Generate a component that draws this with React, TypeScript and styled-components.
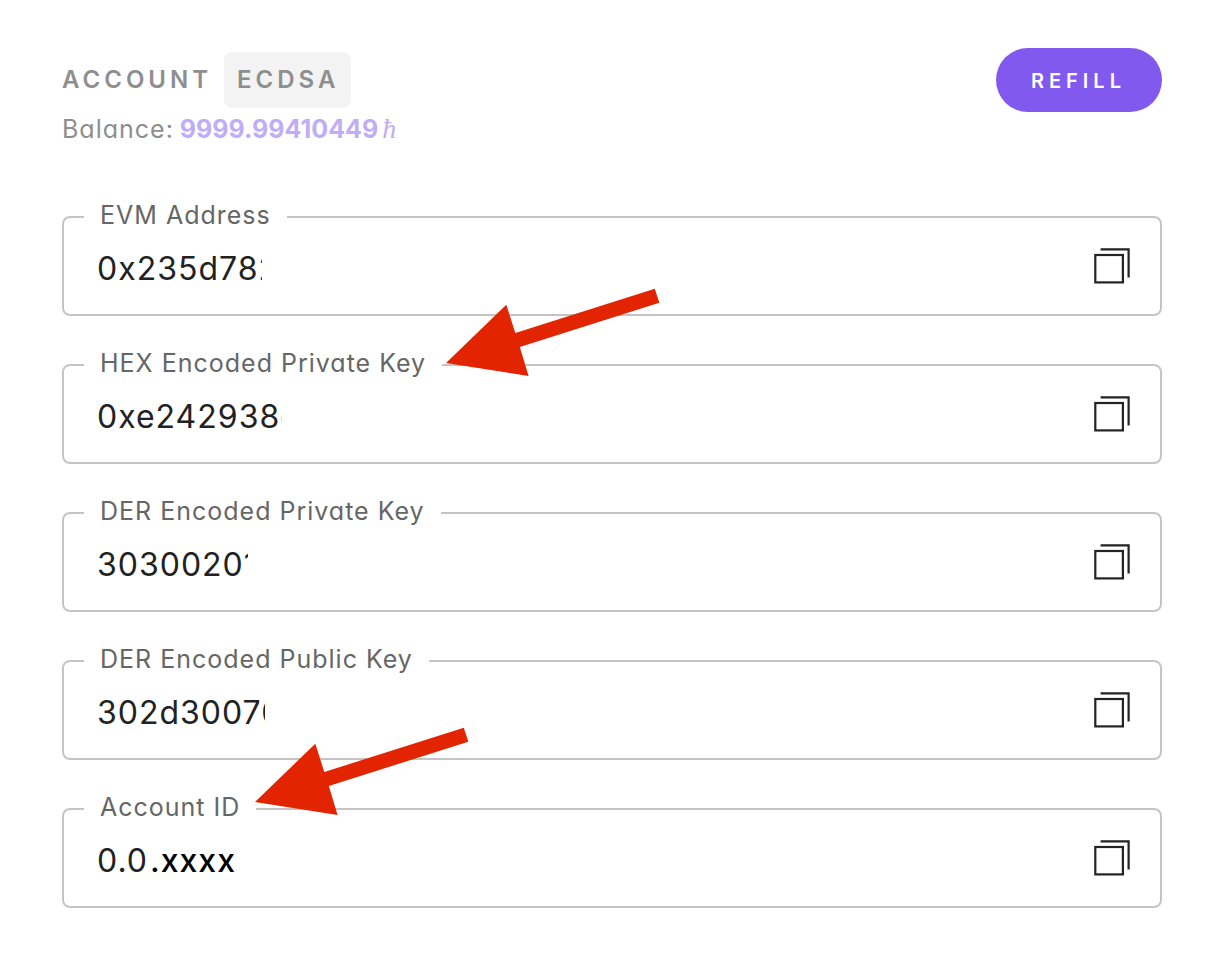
import React, { useId } from "react";
import styled, { createGlobalStyle } from "styled-components";

const GlobalStyle = createGlobalStyle`
  *, *::before, *::after { box-sizing: border-box; }
  body {
    margin: 0;
    background: #ffffff;
    color: #222222;
    font-family: Inter, "Liberation Sans", sans-serif;
    font-feature-settings: "cv11";
  }
`;

const Page = styled.main`
  padding: 48px 62px 58px;
`;

const Header = styled.header`
  display: flex;
  align-items: flex-start;
  justify-content: space-between;
  margin-bottom: 56px;
`;

const Summary = styled.div`
  padding-top: 4px;
`;

const Title = styled.h1`
  display: flex;
  align-items: center;
  gap: 12px;
  margin: 0;
  color: #8e8e8e;
  font-size: 24px;
  font-weight: 600;
  line-height: 56px;
  letter-spacing: 4px;
`;

const KeyType = styled.span`
  padding: 0 12px 0 13px;
  border-radius: 8px;
  background: #f3f3f3;
`;

const Balance = styled.p`
  display: flex;
  align-items: baseline;
  gap: 6px;
  margin: 5px 0 0;
  color: #8e8e8e;
  font-size: 25px;
  line-height: 32px;
  letter-spacing: 1px;
`;

const Amount = styled.strong`
  color: #c1adf7;
  font-weight: 700;
  letter-spacing: 0;
`;

const Unit = styled.i`
  margin-left: 4px;
  font-family: "Liberation Serif", serif;
  font-size: 28px;
  font-weight: 400;
  line-height: 1;
`;

const RefillButton = styled.button`
  height: 64px;
  padding: 2px 36px 0 35px;
  border: 0;
  border-radius: 32px;
  background: #8259ef;
  color: #ffffff;
  font-family: inherit;
  font-size: 20px;
  font-weight: 600;
  letter-spacing: 5px;
  cursor: pointer;
`;

const Fields = styled.form`
  display: flex;
  flex-direction: column;
  gap: 33px;
`;

const Fieldset = styled.fieldset`
  position: relative;
  min-width: 0;
  margin: 0;
  padding: 0 30px 16px 20px;
  border: 2px solid #c4c4c4;
  border-radius: 8px;
`;

const Legend = styled.legend`
  padding: 0 16px 4px;
  color: #666666;
  font-size: 25px;
  line-height: 28px;
  letter-spacing: 1px;
`;

const Row = styled.div`
  display: flex;
  align-items: center;
  height: 65px;
  padding-left: 13px;
`;

const Value = styled.input<{ $width: number }>`
  width: ${(p) => p.$width}px;
  height: 48px;
  padding: 5px 0 0;
  border: 0;
  outline: 0;
  background: transparent;
  color: #222222;
  font-family: inherit;
  font-feature-settings: inherit;
  font-size: 32px;
  letter-spacing: 1px;
`;

const Placeholder = styled.span`
  padding-top: 5px;
  color: #000000;
  font-size: 32px;
  font-weight: 500;
  letter-spacing: 1px;
`;

const CopyButton = styled.button`
  display: flex;
  margin-left: auto;
  padding: 0;
  border: 0;
  background: transparent;
  color: #222222;
  cursor: pointer;
`;

const Arrow = styled.svg<{ $left: number; $top: number }>`
  position: absolute;
  z-index: 1;
  top: ${(p) => p.$top}px;
  left: ${(p) => p.$left}px;
  pointer-events: none;
`;

const CopyIcon = () => (
  <svg width="36" height="36" viewBox="0 0 36 36" fill="none" stroke="currentColor" strokeWidth="2.2" aria-hidden="true">
    <rect x="1.3" y="7" width="27.6" height="27.4" />
    <path d="M6.6 1.4H34.6V29.5" />
  </svg>
);

type FieldProps = {
  label: string;
  value: string;
  width: number;
  suffix?: string;
  arrow?: { left: number; top: number };
};

const Field = ({ label, value, width, suffix, arrow }: FieldProps) => {
  const id = useId();
  return (
    <Fieldset>
      <Legend>
        <label htmlFor={id}>{label}</label>
      </Legend>
      <Row>
        <Value id={id} $width={width} defaultValue={value} readOnly />
        {suffix && <Placeholder>{suffix}</Placeholder>}
        <CopyButton type="button" aria-label={`Copy ${label}`}>
          <CopyIcon />
        </CopyButton>
      </Row>
      {arrow && (
        <Arrow $left={arrow.left} $top={arrow.top} width="214" height="89" viewBox="0 0 214 89" aria-hidden="true">
          <path d="M0 75L60.3 16.7L69.3 45L208.8 0.7L213.3 14.7L73.8 59L82.6 88Z" fill="#e22400" />
        </Arrow>
      )}
    </Fieldset>
  );
};

const fields: FieldProps[] = [
  { label: "EVM Address", value: "0x235d782", width: 165 },
  { label: "HEX Encoded Private Key", value: "0xe242938c", width: 185, arrow: { left: 382, top: -93 } },
  { label: "DER Encoded Private Key", value: "30300201", width: 151 },
  { label: "DER Encoded Public Key", value: "302d30070", width: 168 },
  { label: "Account ID", value: "0.0", width: 53, suffix: ".xxxx", arrow: { left: 191, top: -98 } },
];

export default function App() {
  return (
    <>
      <GlobalStyle />
      <Page>
        <Header>
          <Summary>
            <Title>
              ACCOUNT <KeyType>ECDSA</KeyType>
            </Title>
            <Balance>
              Balance:
              <Amount>
                9999.99410449<Unit>ħ</Unit>
              </Amount>
            </Balance>
          </Summary>
          <RefillButton type="button">REFILL</RefillButton>
        </Header>
        <Fields>
          {fields.map((f) => (
            <Field key={f.label} {...f} />
          ))}
        </Fields>
      </Page>
    </>
  );
}
